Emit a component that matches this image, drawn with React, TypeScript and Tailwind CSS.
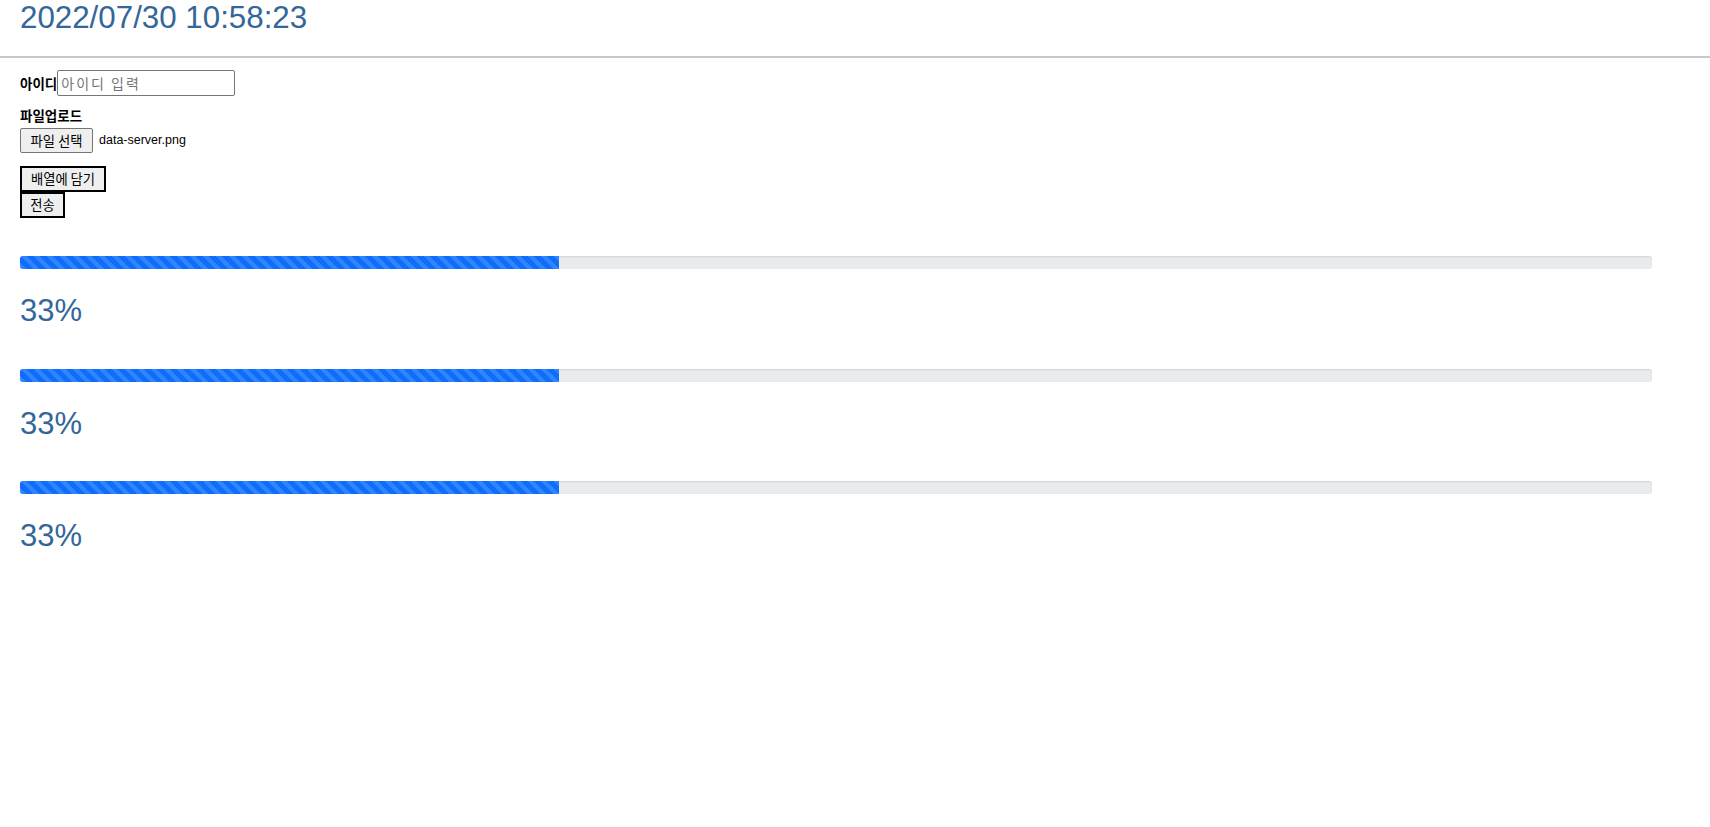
import { useState } from 'react';

const ko = "font-['Noto_Sans_CJK_KR',sans-serif]";
const latin = "font-['Liberation_Sans',Arial,sans-serif]";

function ProgressBlock({ percent }: { percent: number }) {
  return (
    <div>
      <div className="w-[1632px] h-[13px] rounded-[3px] bg-[#e9ecef] overflow-hidden shadow-[inset_0_1px_2px_rgba(0,0,0,0.1)]">
        <div
          className="h-full bg-[#0d6efd] bg-[linear-gradient(45deg,rgba(255,255,255,0.15)_25%,transparent_25%,transparent_50%,rgba(255,255,255,0.15)_50%,rgba(255,255,255,0.15)_75%,transparent_75%,transparent)] bg-[length:13px_13px]"
          style={{ width: `${percent}%` }}
        />
      </div>
      <p className={`${latin} mt-[25px] text-[31px] leading-[34px] text-[#336699]`}>{percent}%</p>
    </div>
  );
}

export default function App() {
  const [userId, setUserId] = useState('');
  const bars = [33, 33, 33];

  return (
    <div className="min-h-screen bg-white text-black">
      <div className="h-[58px] border-b-2 border-[#c8c8c8] px-5 pt-px">
        <h1 className={`${latin} text-[31.3px] leading-[34px] text-[#336699]`}>2022/07/30 10:58:23</h1>
      </div>

      <div className="px-5 pt-3">
        <div className="flex items-baseline">
          <label className={`${ko} text-[13.5px] font-bold`}>아이디</label>
          <input
            value={userId}
            onChange={(e) => setUserId(e.target.value)}
            placeholder="아이디 입력"
            className={`${ko} w-[178px] h-[26px] px-[3px] text-[14px] tracking-[2px] border border-[#767676] rounded-[2px] placeholder:text-[#757575] outline-none`}
          />
        </div>

        <p className={`${ko} mt-[11px] text-[13.5px] leading-[16px] font-bold`}>파일업로드</p>
        <div className="mt-[5px] flex items-center gap-[6px]">
          <button className={`${ko} w-[73px] h-[25px] text-[13.3px] bg-[#efefef] border border-[#767676] rounded-[2px]`}>
            파일 선택
          </button>
          <span className={`${latin} text-[12.5px]`}>data-server.png</span>
        </div>

        <div className="mt-[13px] flex flex-col items-start">
          <button className={`${ko} w-[86px] h-[26px] text-[13.3px] bg-[#efefef] border-2 border-black`}>배열에 담기</button>
          <button className={`${ko} w-[45px] h-[26px] text-[13.3px] bg-[#efefef] border-2 border-black`}>전송</button>
        </div>

        <div className="mt-[38px] flex flex-col gap-[40.5px]">
          {bars.map((p, i) => (
            <ProgressBlock key={i} percent={p} />
          ))}
        </div>
      </div>
    </div>
  );
}
